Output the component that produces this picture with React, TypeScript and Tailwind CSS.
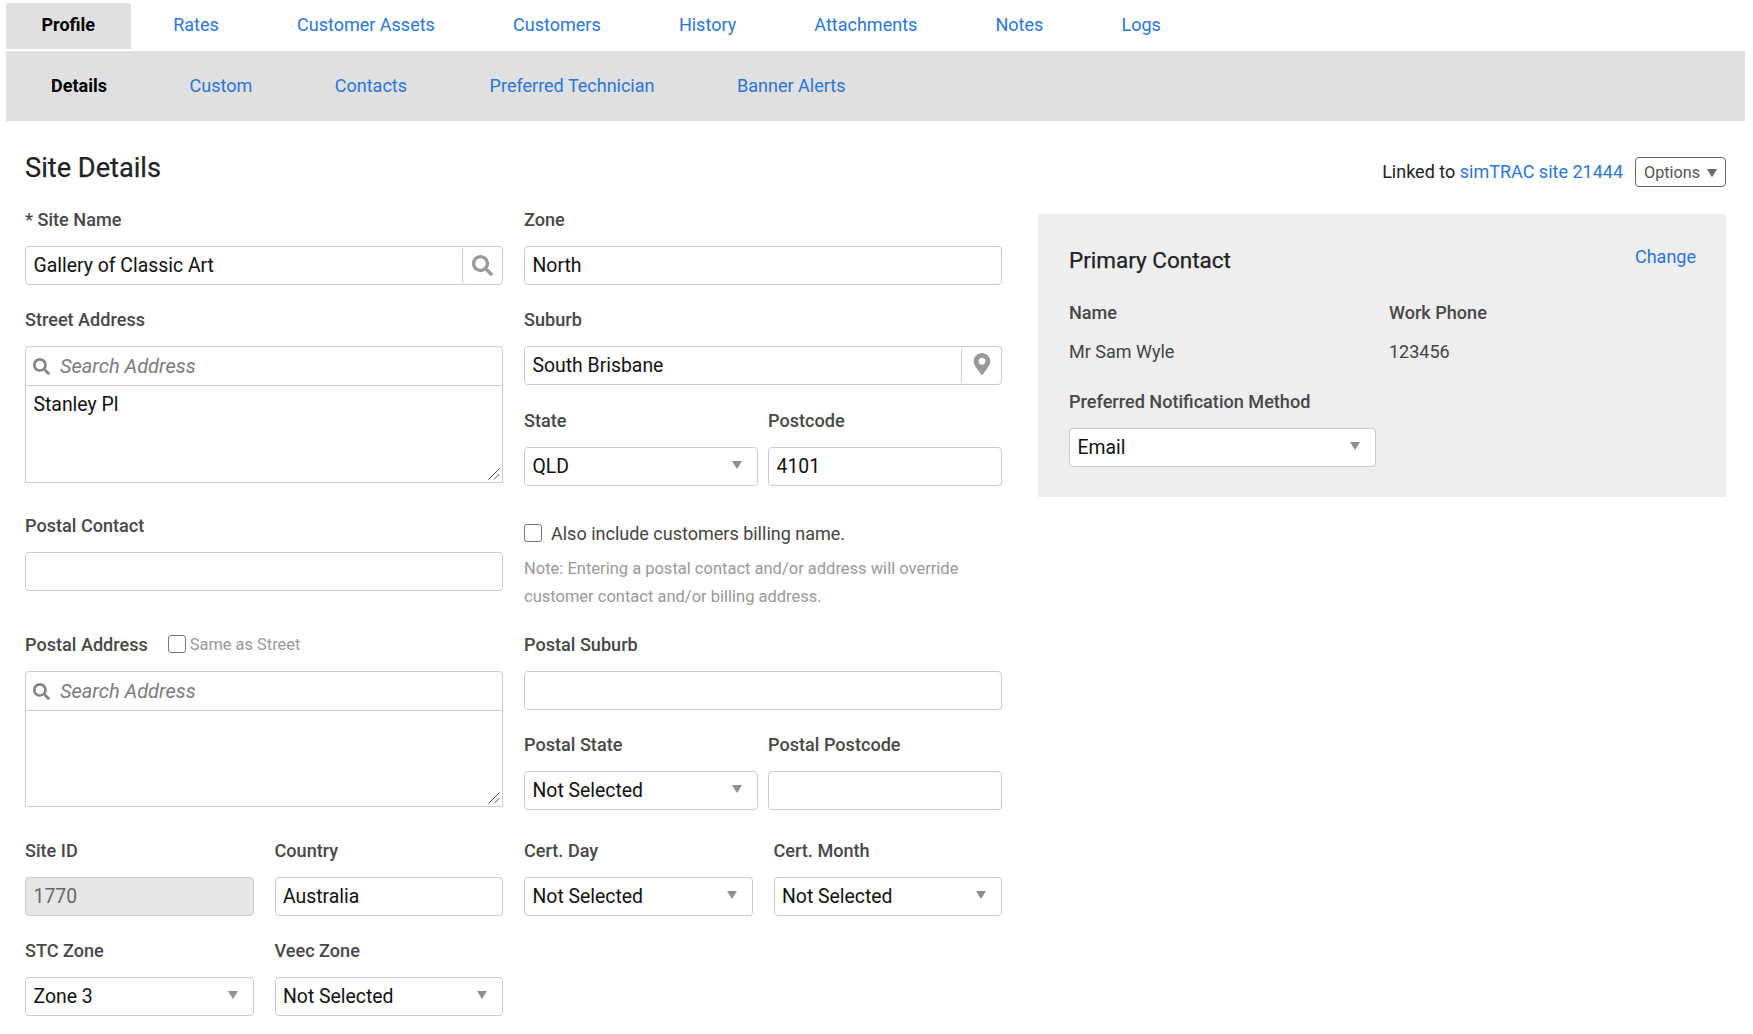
import React from "react";
import { FaSearch, FaMapMarkerAlt } from "react-icons/fa";

const inputBase =
  "h-[39px] border border-[#ccc] rounded-[4px] bg-white flex items-center pl-[7.5px] pt-[1px] text-[19.4px] text-[#111] leading-none";

const labelText = "h-[24px] leading-[24px] text-[18.1px] font-medium text-[#484848] whitespace-nowrap";

function Label({ children }: { children: React.ReactNode }) {
  return <div className={labelText + " mb-[14px]"}>{children}</div>;
}

function Caret({ className = "", fill = "#8f8f8f" }: { className?: string; fill?: string }) {
  return (
    <svg width="10" height="8" viewBox="0 0 10 8" className={className}>
      <path d="M0 0H10L5 8Z" fill={fill} />
    </svg>
  );
}

function Input({ value = "" }: { value?: string }) {
  return <div className={inputBase}>{value}</div>;
}

function Select({ value, className = "" }: { value: string; className?: string }) {
  return (
    <div className={inputBase + " justify-between pr-[15px] " + className}>
      <span>{value}</span>
      <Caret className="-mt-[4px]" />
    </div>
  );
}

function Field({ label, children, className = "" }: { label: React.ReactNode; children: React.ReactNode; className?: string }) {
  return (
    <div className={"min-w-0 " + className}>
      <Label>{label}</Label>
      {children}
    </div>
  );
}

function Grip() {
  return (
    <svg width="12" height="12" viewBox="0 0 12 12" className="absolute right-[2px] bottom-[2px]">
      <path d="M0.5 11.5L11.5 0.5M6 11.5L11.5 6" stroke="#555" strokeWidth="1" fill="none" />
    </svg>
  );
}

function AddressBox({ value, height }: { value?: string; height: string }) {
  return (
    <div className={"relative border border-[#ccc] rounded-t-[4px] bg-white " + height}>
      <div className="h-[39px] border-b border-[#ccc] flex items-center pl-[7px] gap-[10px]">
        <FaSearch className="text-[#858585] text-[17px]" />
        <span className="italic text-[20px] text-[#7c7c7c]">Search Address</span>
      </div>
      <div className="pl-[7.5px] pt-[5px] text-[19.4px] leading-[27px] text-[#111]">{value}</div>
      <Grip />
    </div>
  );
}

function Tab({ children, active, sub }: { children: string; active?: boolean; sub?: boolean }) {
  return (
    <a
      className={
        "flex items-center whitespace-nowrap text-[18px] " +
        (sub ? "px-[37px] " : "px-[35.5px] pb-[3px] rounded-t-[3px] ") +
        (active ? "font-bold text-black " : "text-[#2a76d6] ") +
        (active && !sub ? "bg-[#e0e0e0]" : "")
      }
    >
      {children}
    </a>
  );
}

export default function App() {
  return (
    <div className="min-h-[1034px] bg-white font-['Roboto',sans-serif] overflow-hidden">
      <nav className="h-[51px] pt-[3px] pl-[6px] flex gap-[7.2px] [&>a]:h-[46px]">
        <Tab active>Profile</Tab>
        <Tab>Rates</Tab>
        <Tab>Customer Assets</Tab>
        <Tab>Customers</Tab>
        <Tab>History</Tab>
        <Tab>Attachments</Tab>
        <Tab>Notes</Tab>
        <Tab>Logs</Tab>
      </nav>
      <nav className="ml-[6px] mr-[8px] h-[70px] bg-[#e0e0e0] flex pl-[8px] gap-[8.6px] pb-[1px]">
        <Tab sub active>Details</Tab>
        <Tab sub>Custom</Tab>
        <Tab sub>Contacts</Tab>
        <Tab sub>Preferred Technician</Tab>
        <Tab sub>Banner Alerts</Tab>
      </nav>

      <main className="pl-[25px] pr-[27px]">
        <header className="mt-[27px] mb-[20px] h-[40px] flex justify-between">
          <h1 className="text-[27.2px] leading-[40px] font-normal text-[#222] [-webkit-text-stroke:0.25px_#222]">Site Details</h1>
          <div className="flex items-center gap-[12px] pt-[8px]">
            <span className="text-[18px] text-[#222] -mt-[1px]">
              Linked to <a className="text-[#2a76d6]">simTRAC site 21444</a>
            </span>
            <button className="w-[91px] h-[30px] border border-[#666] rounded-[4px] flex items-center justify-between pl-[8px] pr-[8px] text-[16.2px] text-[#555]">
              <span className="mt-[2px]">Options</span>
              <Caret fill="#666" className="mt-[1px]" />
            </button>
          </div>
        </header>

        <div className="flex gap-[36px] items-start">
          <div className="w-[977px] shrink-0 grid grid-cols-2 gap-x-[21px]">
            <div className="min-w-0">
              <Field label="* Site Name">
                <div className={inputBase + " !pr-0 !pt-0 justify-between"}>
                  <span className="mt-[1px]">Gallery of Classic Art</span>
                  <span className="w-[40px] h-full border-l border-[#ccc] rounded-[4px] flex items-center justify-center">
                    <FaSearch className="text-[#999] text-[21px]" />
                  </span>
                </div>
              </Field>
              <Field label="Street Address" className="mt-[23px]">
                <AddressBox value="Stanley Pl" height="h-[137px]" />
              </Field>
              <Field label="Postal Contact" className="mt-[31px]">
                <Input />
              </Field>
              <Field
                className="mt-[42px]"
                label={
                  <span className="flex items-center">
                    Postal Address
                    <span className="ml-[20px] -mt-[2px] w-[18px] h-[18px] border-[1.5px] border-[#767676] rounded-[3px]" />
                    <span className="ml-[4px] font-normal text-[16.4px] text-[#999]">Same as Street</span>
                  </span>
                }
              >
                <AddressBox height="h-[136px]" />
              </Field>
              <div className="mt-[32px] grid grid-cols-2 gap-x-[21px]">
                <Field label="Site ID">
                  <div className={inputBase + " !bg-[#e6e6e6] !text-[#666]"}>1770</div>
                </Field>
                <Field label="Country">
                  <Input value="Australia" />
                </Field>
                <Field label="STC Zone" className="mt-[23px]">
                  <Select value="Zone 3" />
                </Field>
                <Field label="Veec Zone" className="mt-[23px]">
                  <Select value="Not Selected" />
                </Field>
              </div>
            </div>

            <div className="min-w-0">
              <Field label="Zone">
                <Input value="North" />
              </Field>
              <Field label="Suburb" className="mt-[23px]">
                <div className={inputBase + " !pr-0 !pt-0 justify-between"}>
                  <span className="mt-[1px]">South Brisbane</span>
                  <span className="w-[40px] h-full border-l border-[#ccc] rounded-[4px] flex items-center justify-center">
                    <FaMapMarkerAlt className="text-[#999] text-[22px] -mt-[3px]" />
                  </span>
                </div>
              </Field>
              <div className="mt-[24px] grid grid-cols-2 gap-x-[10px]">
                <Field label="State">
                  <Select value="QLD" />
                </Field>
                <Field label="Postcode">
                  <Input value="4101" />
                </Field>
              </div>
              <div className="mt-[38px] flex items-center h-[18px] text-[18px] text-[#444]">
                <span className="w-[18px] h-[18px] border-[1.5px] border-[#767676] rounded-[3px] mr-[9px]" />
                Also include customers billing name.
              </div>
              <p className="mt-[13px] text-[16.5px] leading-[28px] text-[#999]">
                Note: Entering a postal contact and/or address will override
                <br />
                customer contact and/or billing address.
              </p>
              <Field label="Postal Suburb" className="mt-[22px]">
                <Input />
              </Field>
              <div className="mt-[23px] grid grid-cols-2 gap-x-[10px]">
                <Field label="Postal State">
                  <Select value="Not Selected" />
                </Field>
                <Field label="Postal Postcode">
                  <Input />
                </Field>
              </div>
              <div className="mt-[29px] grid grid-cols-2 gap-x-[21px]">
                <Field label="Cert. Day">
                  <Select value="Not Selected" />
                </Field>
                <Field label="Cert. Month">
                  <Select value="Not Selected" />
                </Field>
              </div>
            </div>
          </div>

          <aside className="flex-1 mt-[6px] bg-[#eeeeee] pt-[26px] pb-[30px] pl-[31px] pr-[30px]">
            <div className="flex justify-between items-start h-[40px]">
              <h2 className="text-[22.5px] leading-[40px] font-normal text-[#222] [-webkit-text-stroke:0.25px_#222]">Primary Contact</h2>
              <a className="text-[18px] leading-[34px] text-[#2a76d6]">Change</a>
            </div>
            <div className="mt-[21px] flex">
              <div className="w-[320px]">
                <div className={labelText}>Name</div>
                <div className="mt-[15px] h-[24px] leading-[24px] text-[18px] text-[#444]">Mr Sam Wyle</div>
              </div>
              <div>
                <div className={labelText}>Work Phone</div>
                <div className="mt-[15px] h-[24px] leading-[24px] text-[18px] text-[#444]">123456</div>
              </div>
            </div>
            <div className="mt-[26px]">
              <Label>Preferred Notification Method</Label>
              <Select value="Email" className="w-[307px]" />
            </div>
          </aside>
        </div>
      </main>
    </div>
  );
}
